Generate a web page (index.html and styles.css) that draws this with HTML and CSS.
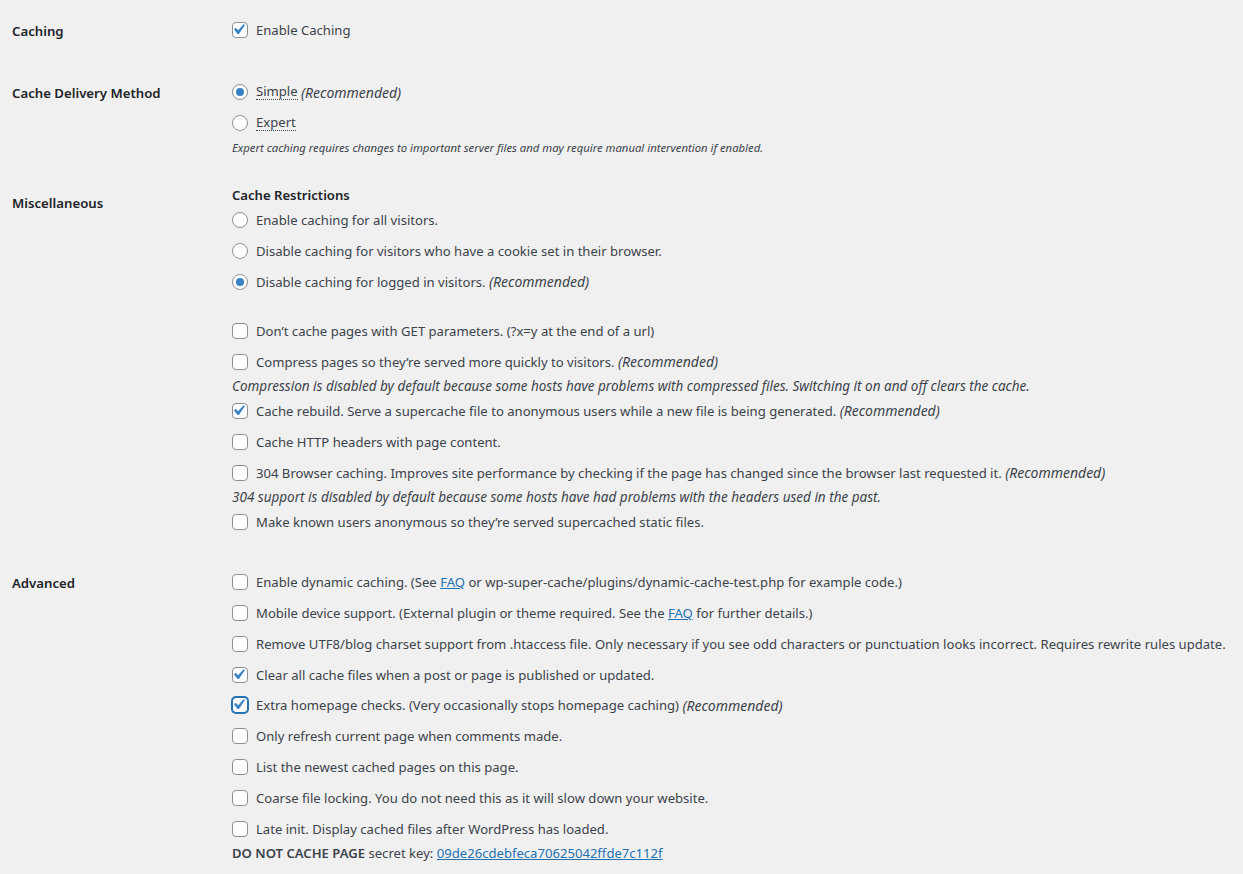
FILE: index.html
```html
<!DOCTYPE html>
<html>
<head>
<meta charset="utf-8">
<link rel="stylesheet" href="styles.css">
</head>
<body>
<div class="form">
  <div class="row r1">
    <div class="th">Caching</div>
    <div class="td">
      <label class="opt"><span class="cb checked"></span>Enable Caching</label>
    </div>
  </div>
  <div class="row r2">
    <div class="th">Cache Delivery Method</div>
    <div class="td">
      <label class="opt"><span class="rb checked"></span><abbr>Simple</abbr>&nbsp;<em>(Recommended)</em></label>
      <label class="opt"><span class="rb"></span><abbr>Expert</abbr></label>
      <div class="desc small"><em>Expert caching requires changes to important server files and may require manual intervention if enabled.</em></div>
    </div>
  </div>
  <div class="row r3">
    <div class="th">Miscellaneous</div>
    <div class="td">
      <div class="legend">Cache Restrictions</div>
      <label class="opt"><span class="rb"></span>Enable caching for all visitors.</label>
      <label class="opt"><span class="rb"></span>Disable caching for visitors who have a cookie set in their browser.</label>
      <label class="opt"><span class="rb checked"></span>Disable caching for logged in visitors.&nbsp;<em>(Recommended)</em></label>
      <div class="spacer"></div>
      <label class="opt"><span class="cb"></span>Don’t cache pages with GET parameters. (?x=y at the end of a url)</label>
      <label class="opt"><span class="cb"></span>Compress pages so they’re served more quickly to visitors.&nbsp;<em>(Recommended)</em></label>
      <div class="desc"><em>Compression is disabled by default because some hosts have problems with compressed files. Switching it on and off clears the cache.</em></div>
      <label class="opt"><span class="cb checked"></span>Cache rebuild. Serve a supercache file to anonymous users while a new file is being generated.&nbsp;<em>(Recommended)</em></label>
      <label class="opt"><span class="cb"></span>Cache HTTP headers with page content.</label>
      <label class="opt"><span class="cb"></span>304 Browser caching. Improves site performance by checking if the page has changed since the browser last requested it.&nbsp;<em>(Recommended)</em></label>
      <div class="desc"><em>304 support is disabled by default because some hosts have had problems with the headers used in the past.</em></div>
      <label class="opt"><span class="cb"></span>Make known users anonymous so they’re served supercached static files.</label>
    </div>
  </div>
  <div class="row r4">
    <div class="th">Advanced</div>
    <div class="td">
      <label class="opt"><span class="cb"></span>Enable dynamic caching. (See&nbsp;<a href="#">FAQ</a>&nbsp;or wp-super-cache/plugins/dynamic-cache-test.php for example code.)</label>
      <label class="opt"><span class="cb"></span>Mobile device support. (External plugin or theme required. See the&nbsp;<a href="#">FAQ</a>&nbsp;for further details.)</label>
      <label class="opt"><span class="cb"></span>Remove UTF8/blog charset support from .htaccess file. Only necessary if you see odd characters or punctuation looks incorrect. Requires rewrite rules update.</label>
      <label class="opt"><span class="cb checked"></span>Clear all cache files when a post or page is published or updated.</label>
      <label class="opt"><span class="cb checked focus"></span>Extra homepage checks. (Very occasionally stops homepage caching)&nbsp;<em>(Recommended)</em></label>
      <label class="opt"><span class="cb"></span>Only refresh current page when comments made.</label>
      <label class="opt"><span class="cb"></span>List the newest cached pages on this page.</label>
      <label class="opt"><span class="cb"></span>Coarse file locking. You do not need this as it will slow down your website.</label>
      <label class="opt"><span class="cb"></span>Late init. Display cached files after WordPress has loaded.</label>
      <div class="keyline"><strong>DO NOT CACHE PAGE</strong>&nbsp;secret key:&nbsp;<a href="#">09de26cdebfeca70625042ffde7c112f</a></div>
    </div>
  </div>
</div>
</body>
</html>
```

FILE: styles.css
```css
html, body {
  margin: 0;
  padding: 0;
  background: #f0f0f1;
}
body {
  font-family: "Noto Sans", "Open Sans", sans-serif;
  font-size: 13.1px;
  color: #3c434a;
  overflow: hidden;
}
.form {
  padding: 2px 0 0 12px;
}
.row {
  display: flex;
}
.th {
  width: 220px;
  flex: none;
  box-sizing: border-box;
  padding: 20px 10px 20px 0;
  line-height: 18px;
  font-size: 13.2px;
  font-weight: 600;
  color: #1d2327;
}
.td {
  flex: 1;
  display: flex;
  flex-direction: column;
  padding: 12px 0 0 0;
  white-space: nowrap;
}
.r1 .td { padding-bottom: 19px; }
.r2 .td { padding-top: 12.5px; padding-bottom: 17.5px; }
.r3 .td { padding-bottom: 17px; }
.r4 .td { padding-top: 12.5px; }
.opt {
  display: flex;
  align-items: center;
  height: 31px;
}
.r4 .opt {
  height: 30.875px;
}
.opt em {
  font-size: 14px;
}
.cb, .rb {
  flex: none;
  width: 16px;
  height: 16px;
  box-sizing: border-box;
  border: 1px solid #8c8f94;
  background: #fff;
  margin-right: 8px;
  position: relative;
}
.cb { border-radius: 4px; }
.rb { border-radius: 50%; }
.cb.checked::before {
  content: "";
  position: absolute;
  left: -5px;
  top: -4px;
  width: 21px;
  height: 21px;
  background: url("data:image/svg+xml;utf8,<svg xmlns='http://www.w3.org/2000/svg' viewBox='0 0 20 20'><path d='M14.83 4.89l1.34.94-5.81 8.38H9.02L5.78 9.67l1.34-1.25 2.57 2.4z' fill='%233582c4'/></svg>") no-repeat center / 21px 21px;
}
.cb.focus {
  border-color: #2271b1;
  box-shadow: 0 0 0 1px #2271b1;
}
.rb.checked::before {
  content: "";
  position: absolute;
  left: 3px;
  top: 3px;
  width: 8px;
  height: 8px;
  border-radius: 50%;
  background: #3582c4;
}
abbr {
  text-decoration: none;
  border-bottom: 1px dotted #3c434a;
  line-height: 15px;
}
.desc {
  height: 18px;
  line-height: 18px;
  font-size: 13.5px;
}
.desc.small {
  font-size: 11.3px;
}
.legend {
  height: 18px;
  line-height: 18px;
  font-weight: 600;
  color: #1d2327;
}
.spacer {
  height: 18px;
}
.keyline {
  height: 18px;
  line-height: 18px;
}
.keyline strong {
  font-weight: 600;
}
a {
  color: #2271b1;
  text-decoration: underline;
}
```
